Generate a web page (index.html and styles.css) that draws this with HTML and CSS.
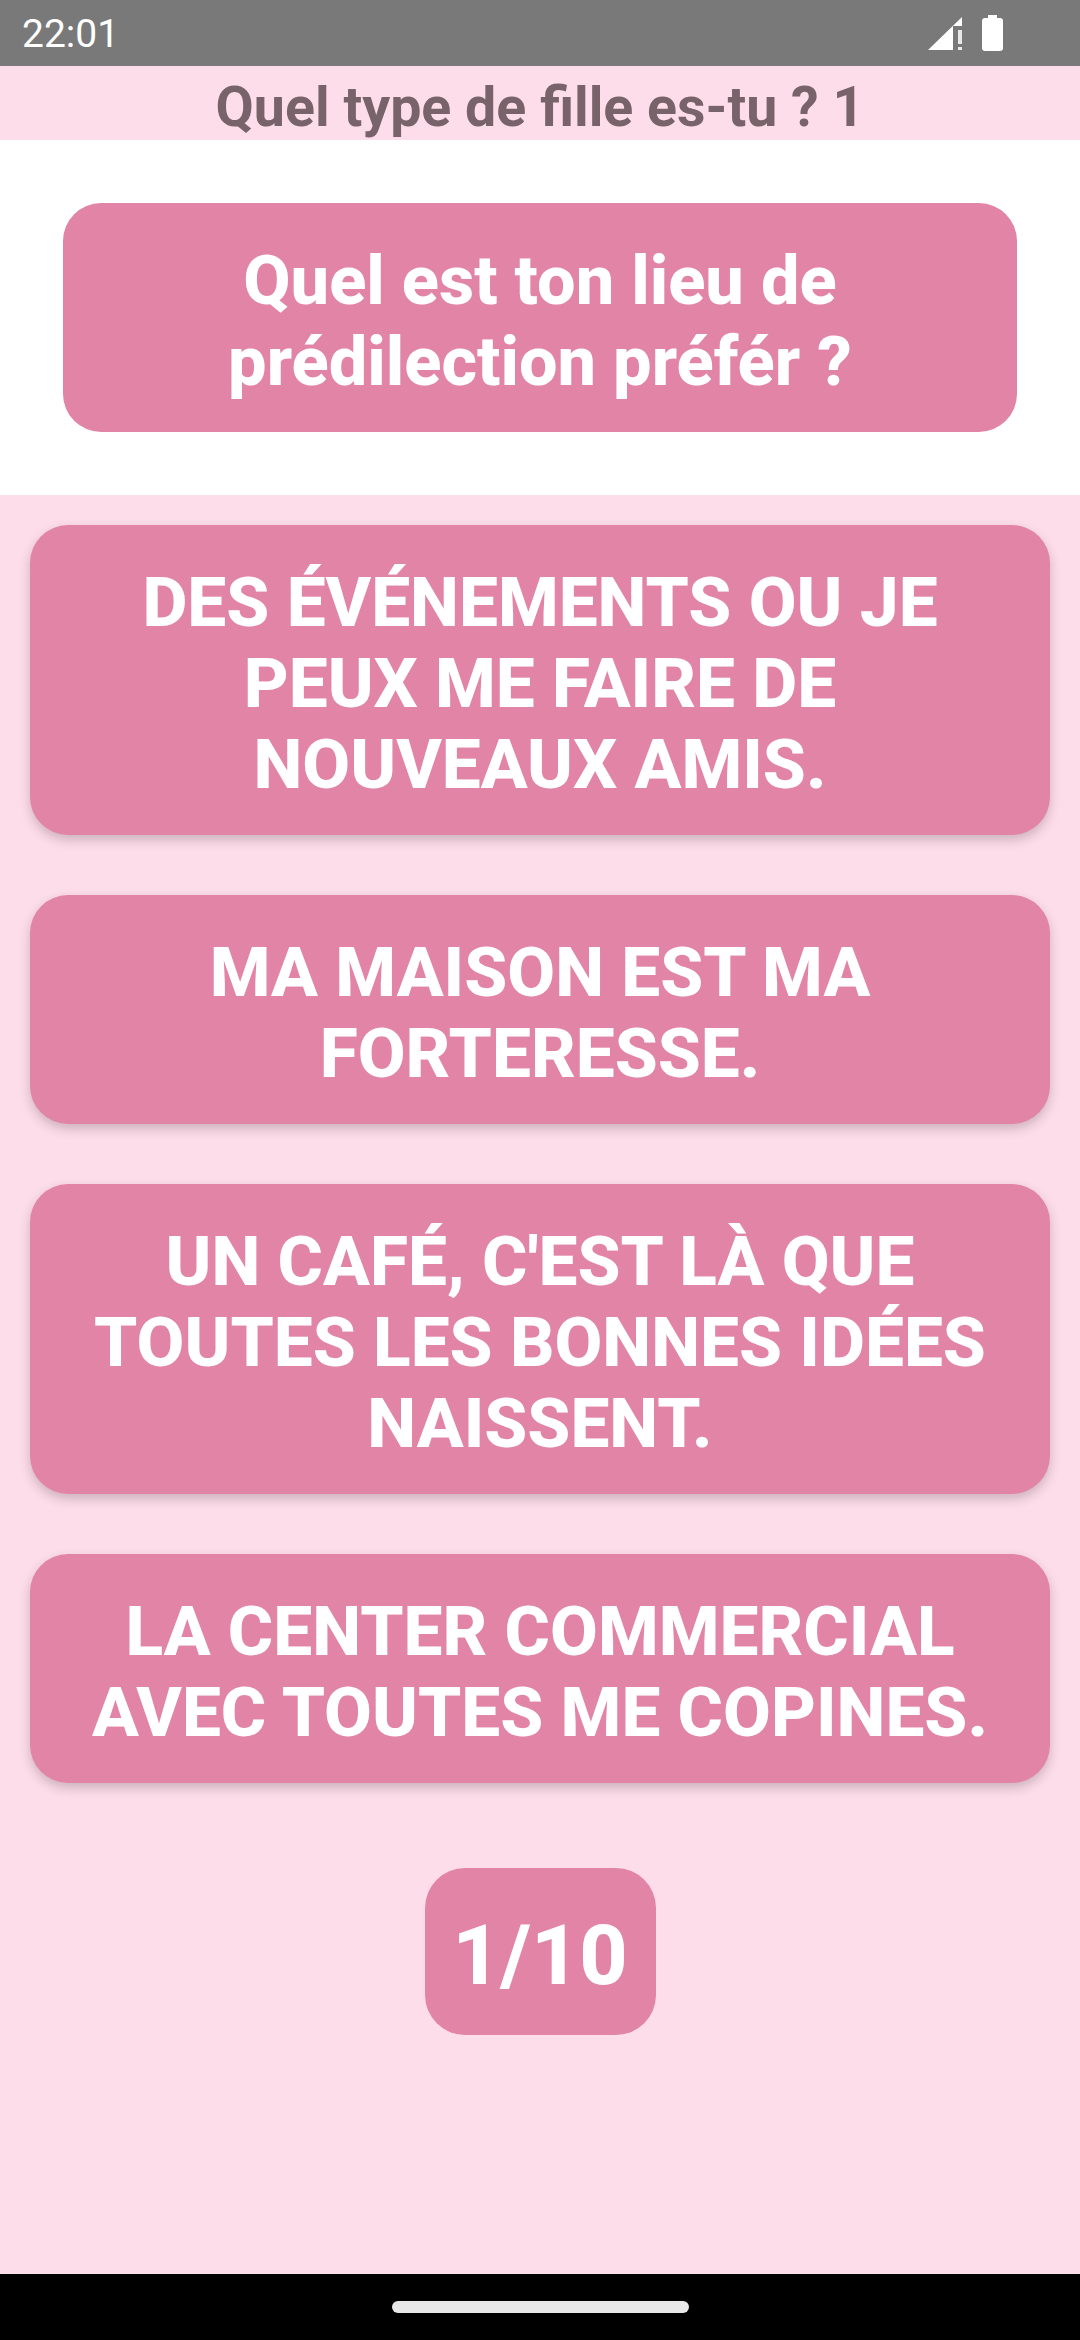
FILE: index.html
```html
<!DOCTYPE html>
<html lang="fr">
<head>
    <meta charset="UTF-8">
    <meta name="viewport" content="width=device-width, initial-scale=1.0">
    <title>Quel type de fille es-tu ?</title>
    <link rel="stylesheet" href="styles.css">
</head>
<body>
    <div class="status-bar">
        <span class="clock">22:01</span>
        <div class="status-icons">
            <svg class="signal" width="34" height="33" viewBox="0 0 34 33">
                <path d="M0 33 L34 0 V9 H25 V33 Z" fill="#fff"/>
                <rect x="30" y="13" width="4" height="14" fill="#e8e8e8"/>
                <rect x="30" y="30" width="4" height="3" fill="#e8e8e8"/>
            </svg>
            <svg class="battery" width="21" height="36" viewBox="0 0 21 36">
                <path d="M6 0 H15 V3 H18 Q21 3 21 6 V33 Q21 36 18 36 H3 Q0 36 0 33 V6 Q0 3 3 3 H6 Z" fill="#fff"/>
            </svg>
        </div>
    </div>

    <div class="title-bar">Quel type de fille es-tu ? 1</div>

    <div class="question-area">
        <div class="question">Quel est ton lieu de prédilection préfér ?</div>
    </div>

    <div class="main">
        <div class="answer">DES ÉVÉNEMENTS OU JE PEUX ME FAIRE DE NOUVEAUX AMIS.</div>
        <div class="answer">MA MAISON EST MA FORTERESSE.</div>
        <div class="answer">UN CAFÉ, C'EST LÀ QUE TOUTES LES BONNES IDÉES NAISSENT.</div>
        <div class="answer">LA CENTER COMMERCIAL AVEC TOUTES ME COPINES.</div>
        <div class="counter">1/10</div>
    </div>

    <div class="nav-bar">
        <div class="home-pill"></div>
    </div>
</body>
</html>
```

FILE: styles.css
```css
body, html {
    margin: 0;
    padding: 0;
    font-family: Roboto, "Liberation Sans", sans-serif;
}

body {
    width: 1080px;
    height: 2340px;
    display: flex;
    flex-direction: column;
    overflow: hidden;
    background-color: #feddea;
}

.status-bar {
    height: 66px;
    background-color: #797979;
    color: #fff;
    display: flex;
    align-items: center;
    justify-content: space-between;
    padding: 0 77px 0 22px;
    box-sizing: border-box;
}

.clock {
    font-size: 39px;
    font-weight: 400;
    padding-top: 2px;
}

.status-icons {
    display: flex;
    align-items: center;
    gap: 20px;
}

.title-bar {
    height: 71px;
    padding-top: 3px;
    line-height: 78px;
    background-color: #feddea;
    color: #776369;
    font-size: 55.5px;
    font-weight: 700;
    text-align: center;
}

.question-area {
    background-color: #fff;
    padding: 63px;
    height: 355px;
    box-sizing: border-box;
}

.question,
.answer,
.counter {
    background-color: #e284a6;
    color: #fff;
    font-weight: 800;
    text-align: center;
}

.question,
.answer {
    font-size: 69.4px;
    line-height: 81px;
    padding: 37px 33px 30px;
    border-radius: 38px;
}

.question {
    font-size: 68.5px;
}

.main {
    flex: 1;
    display: flex;
    flex-direction: column;
    align-items: center;
    gap: 60px;
    padding: 30px 30px 0;
}

.answer {
    align-self: stretch;
    box-shadow: 0 5px 12px rgba(0, 0, 0, 0.2);
}

.counter {
    margin-top: 25px;
    width: 231px;
    height: 159px;
    padding-top: 8px;
    line-height: 159px;
    font-size: 84px;
    border-radius: 40px;
}

.nav-bar {
    height: 66px;
    background-color: #000;
    display: flex;
    align-items: center;
    justify-content: center;
}

.home-pill {
    width: 297px;
    height: 12px;
    background-color: #e8e8e8;
    border-radius: 6px;
}
```
